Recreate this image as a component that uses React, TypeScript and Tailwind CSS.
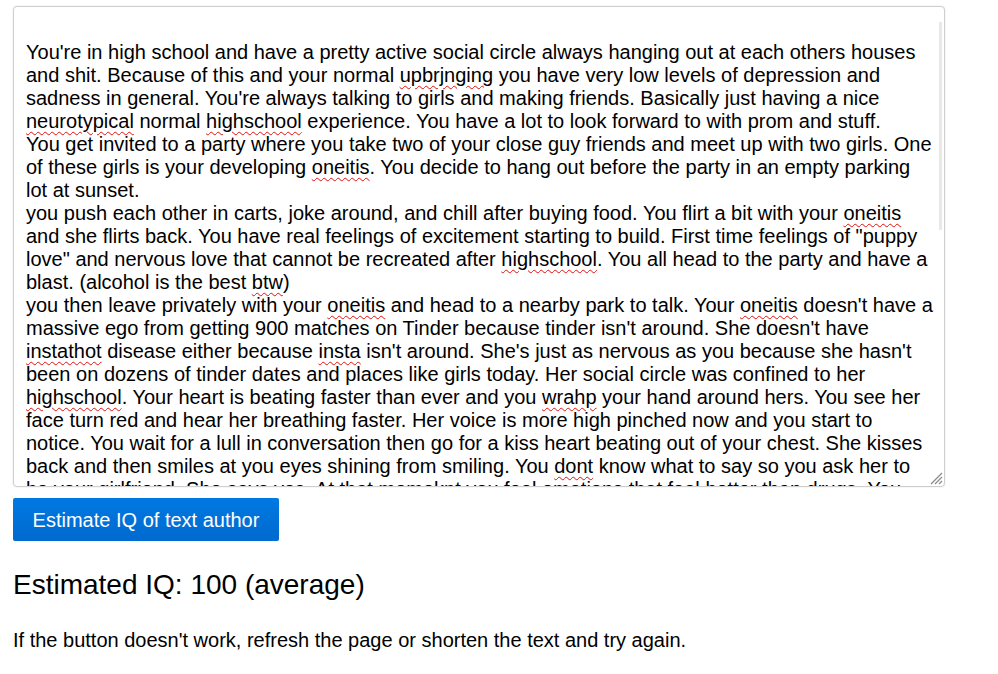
import React from 'react';

// words the browser's spell checker flags in the reference
const FLAGGED = new Set(['upbrjnging', 'neurotypical', 'highschool', 'oneitis', 'btw', 'instathot', 'insta', 'wrahp', 'dont', 'momeknt']);

const STORY = `
You're in high school and have a pretty active social circle always hanging out at each others houses and shit. Because of this and your normal upbrjnging you have very low levels of depression and sadness in general. You're always talking to girls and making friends. Basically just having a nice neurotypical normal highschool experience. You have a lot to look forward to with prom and stuff.
You get invited to a party where you take two of your close guy friends and meet up with two girls. One of these girls is your developing oneitis. You decide to hang out before the party in an empty parking lot at sunset.
you push each other in carts, joke around, and chill after buying food. You flirt a bit with your oneitis and she flirts back. You have real feelings of excitement starting to build. First time feelings of "puppy love" and nervous love that cannot be recreated after highschool. You all head to the party and have a blast. (alcohol is the best btw)
you then leave privately with your oneitis and head to a nearby park to talk. Your oneitis doesn't have a massive ego from getting 900 matches on Tinder because tinder isn't around. She doesn't have instathot disease either because insta isn't around. She's just as nervous as you because she hasn't been on dozens of tinder dates and places like girls today. Her social circle was confined to her highschool. Your heart is beating faster than ever and you wrahp your hand around hers. You see her face turn red and hear her breathing faster. Her voice is more high pinched now and you start to notice. You wait for a lull in conversation then go for a kiss heart beating out of your chest. She kisses back and then smiles at you eyes shining from smiling. You dont know what to say so you ask her to be your girlfriend. She says yes. At that momeknt you feel emotions that feel better than drugs. You walk her home holding hands and the whole night feels like a movie.`;

const renderStory = (text: string) =>
    text.split(/(\s+|[.,()"])/).map((part, i) =>
        FLAGGED.has(part) ? (
            <span key={i} className="underline decoration-wavy decoration-[#e01010] decoration-1 underline-offset-[3px]">
                {part}
            </span>
        ) : (
            part
        )
    );

const ResizeGrip: React.FC = () => (
    <svg width="15" height="15" viewBox="0 0 15 15" className="absolute right-[1px] bottom-[1px]">
        <path d="M14 3 L3 14 M14 7 L7 14 M14 11 L11 14" stroke="#8c8c8c" strokeWidth="1.3" fill="none" />
    </svg>
);

export default function App() {
    return (
        <div className="min-h-screen bg-white px-[13px] pt-[6px] text-black font-['Liberation_Sans',Arial,sans-serif]">
            {/* Text input */}
            <div className="relative w-[932px] h-[481px] rounded-[4px] border border-[#cfcfcf] bg-white shadow-[0_0_2px_rgba(0,0,0,0.12)]">
                <div
                    role="textbox"
                    aria-multiline="true"
                    className="h-full overflow-hidden whitespace-pre-wrap break-words pl-3 pr-[9px] pt-[11px] text-[20px] leading-[23px]"
                >
                    {renderStory(STORY)}
                </div>
                <div className="absolute right-[2px] top-[15px] w-[3px] h-[208px] bg-[#e8e8e8]" />
                <ResizeGrip />
            </div>

            <button className="mt-[11px] h-[43px] w-[266px] rounded-[2px] bg-gradient-to-b from-[#0079e2] to-[#006acf] text-[20px] text-white">
                Estimate IQ of text author
            </button>

            <h2 className="mt-[28px] text-[28px] leading-[32px]">Estimated IQ: 100 (average)</h2>

            <p className="mt-[28px] text-[20px] leading-[23px]">
                If the button doesn't work, refresh the page or shorten the text and try again.
            </p>
        </div>
    );
}
